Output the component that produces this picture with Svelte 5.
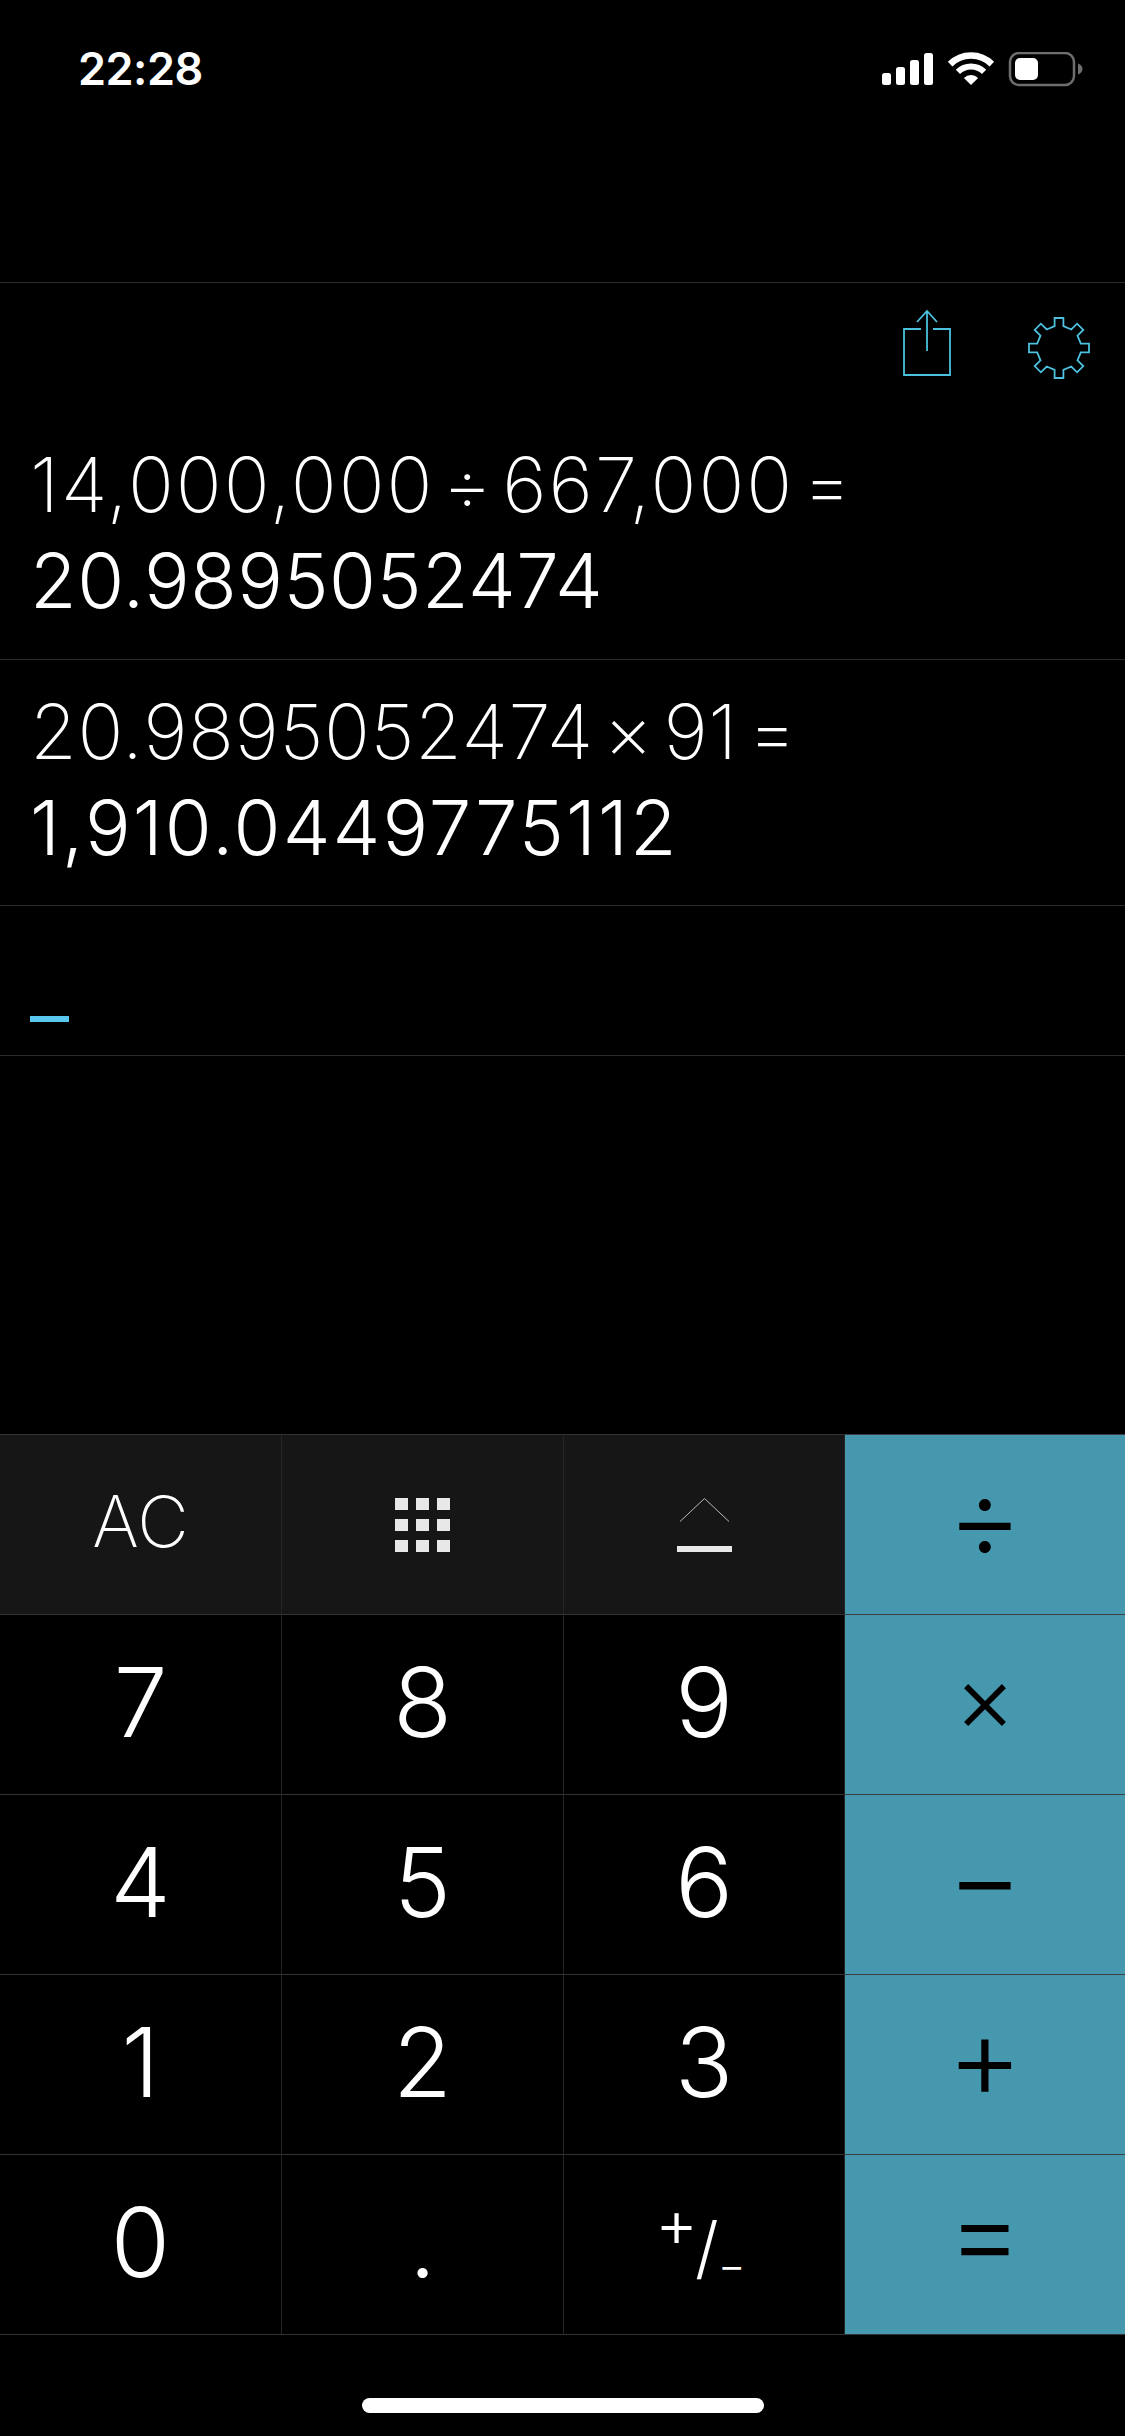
<script>
	const history = [
		{ expr: '14,000,000 ÷ 667,000 =', result: '20.9895052474', wide: false },
		{ expr: '20.9895052474 × 91 =', result: '1,910.0449775112', wide: true }
	];
	const digits = [
		['7', '8', '9', '×'],
		['4', '5', '6', '−'],
		['1', '2', '3', '+']
	];

	// gear outline: 8 identical teeth rotated round the centre
	function gearPoints() {
		const tooth = [[-4.4, -21.8], [-4.4, -30], [4.4, -30], [4.4, -21.8]];
		const pts = [];
		for (let i = 0; i < 8; i++) {
			const a = (i * Math.PI) / 4;
			for (const [x, y] of tooth) {
				const px = x * Math.cos(a) - y * Math.sin(a);
				const py = x * Math.sin(a) + y * Math.cos(a);
				pts.push(`${px.toFixed(1)},${py.toFixed(1)}`);
			}
		}
		return pts.join(' ');
	}
</script>

<div class="phone">
	<div class="status">
		<span class="time">22:28</span>
		<svg class="status-icons" width="202" height="35" viewBox="0 0 202 35">
			<rect x="0" y="21" width="9" height="12" rx="2.5" fill="#fff" />
			<rect x="14" y="15" width="9" height="18" rx="2.5" fill="#fff" />
			<rect x="28" y="8" width="9" height="25" rx="2.5" fill="#fff" />
			<rect x="42" y="1" width="9" height="32" rx="2.5" fill="#fff" />
			<g fill="none" stroke="#fff">
				<path d="M68.14 12.14 A29.5 29.5 0 0 1 109.86 12.14" stroke-width="6.5" />
				<path d="M75.92 19.92 A18.5 18.5 0 0 1 102.08 19.92" stroke-width="6" />
			</g>
			<path d="M89 33 L81.9 25.9 A10 10 0 0 1 96.1 25.9 Z" fill="#fff" />
			<rect x="128" y="1" width="64" height="32" rx="9" fill="none" stroke="#6e6e6e" stroke-width="2.5" />
			<rect x="133" y="6" width="23" height="22" rx="5" fill="#fff" />
			<path d="M196 11.5 C199 12.5 200.5 14.5 200.5 17 C200.5 19.5 199 21.5 196 22.5 Z" fill="#6e6e6e" />
		</svg>
	</div>

	<div class="toolbar">
		<svg class="share" width="48" height="66" viewBox="0 0 48 66" fill="none" stroke="#4cc0de" stroke-width="1.8">
			<path d="M18 19 H1 V65 H47 V19 H30" />
			<path d="M24 41 V1 M14 12 L24 1 L34 12" />
		</svg>
		<svg class="gear" width="64" height="64" viewBox="-32 -32 64 64" fill="none" stroke="#4cc0de" stroke-width="1.8">
			<polygon points={gearPoints()} />
		</svg>
	</div>

	{#each history as row, i}
		<div class="entry" class:first={i === 0}>
			<div class="expr" class:wide={row.wide}>{row.expr}</div>
			<div class="result" class:wide={row.wide}>{row.result}</div>
		</div>
	{/each}

	<div class="input"><span class="cursor"></span></div>

	<div class="keys">
		<button class="key fn ac">AC</button>
		<button class="key fn" aria-label="Grid">
			<svg width="55" height="54" viewBox="0 0 55 54" fill="#e8e8e8">
				{#each [0, 21, 42] as y}
					{#each [0, 21, 42] as x}
						<rect {x} {y} width="13" height="12" />
					{/each}
				{/each}
			</svg>
		</button>
		<button class="key fn" aria-label="Second function">
			<svg width="55" height="54" viewBox="0 0 55 54">
				<path d="M3 23.5 L27.5 0.5 L52 23.5" fill="none" stroke="#bbb" stroke-width="1" />
				<rect x="0" y="48" width="55" height="6" fill="#e8e8e8" />
			</svg>
		</button>
		<button class="key op">÷</button>

		{#each digits as row}
			{#each row as k, j}
				<button class="key" class:op={j === 3} class:times={k === '×'}>{k}</button>
			{/each}
		{/each}

		<button class="key">0</button>
		<button class="key">.</button>
		<button class="key sign"><span class="plus">+</span><span class="slash">/</span><span class="minus">−</span></button>
		<button class="key op equals">=</button>
	</div>

	<div class="home"><span class="home-bar"></span></div>
</div>

<style>
	:global(body) {
		margin: 0;
		background: #000;
	}

	.phone {
		width: 1125px;
		height: 2436px;
		display: flex;
		flex-direction: column;
		background: #000;
		color: #fff;
		font-family: Inter, 'Liberation Sans', sans-serif;
		overflow: hidden;
	}

	.status {
		height: 282px;
		border-bottom: 1px solid #2c2c2c;
		display: flex;
		justify-content: space-between;
		align-items: flex-start;
		flex-shrink: 0;
	}

	.time {
		margin: 42px 0 0 78px;
		font-size: 45px;
		line-height: 54px;
		font-weight: 600;
		letter-spacing: -0.5px;
	}

	.status-icons {
		margin: 52px 41px 0 0;
	}

	.toolbar {
		height: 130px;
		position: relative;
		flex-shrink: 0;
	}

	.share {
		position: absolute;
		left: 903px;
		top: 27px;
	}

	.gear {
		position: absolute;
		left: 1027px;
		top: 33px;
	}

	.entry {
		height: 222px;
		border-bottom: 1px solid #2c2c2c;
		padding: 23px 0 0 30px;
		flex-shrink: 0;
	}

	.entry.first {
		height: 223px;
	}

	.expr,
	.result {
		font-size: 76px;
		line-height: 96px;
		white-space: nowrap;
	}

	.expr {
		font-weight: 250;
		letter-spacing: 2px;
		word-spacing: -15px;
	}

	.expr.wide {
		letter-spacing: 0.6px;
		word-spacing: -12px;
	}

	.result {
		font-weight: 350;
		letter-spacing: 0.5px;
	}

	.result.wide {
		letter-spacing: 2.1px;
	}

	.input {
		height: 149px;
		border-bottom: 1px solid #2c2c2c;
		position: relative;
		flex-shrink: 0;
	}

	.cursor {
		position: absolute;
		left: 30px;
		top: 110px;
		width: 39px;
		height: 6px;
		background: #5ac8ee;
	}

	.keys {
		margin-top: auto;
		display: grid;
		grid-template-columns: 282px 282px 281px 1fr;
		grid-auto-rows: 180px;
		border-bottom: 1px solid #333;
		flex-shrink: 0;
	}

	.key {
		background: #000;
		color: #fff;
		border: 0;
		border-top: 1px solid #333;
		border-right: 1px solid #262626;
		padding: 0 0 6px;
		margin: 0;
		font-family: inherit;
		font-size: 96px;
		font-weight: 300;
		display: flex;
		align-items: center;
		justify-content: center;
	}

	.key.fn {
		background: #161616;
		padding: 0;
	}

	.key.ac {
		font-size: 71px;
		font-weight: 250;
		padding-bottom: 8px;
	}

	.key.op {
		background: #4698af;
		color: #000;
		font-size: 116px;
		font-weight: 300;
		border-right: 0;
		border-top-color: #3f3f3f;
		padding-bottom: 16px;
	}

	.key.op.times {
		font-size: 94px;
		padding-bottom: 14px;
	}

	.key.op.equals {
		padding-bottom: 28px;
	}

	.sign {
		position: relative;
	}

	.plus {
		position: absolute;
		left: 91px;
		top: 36px;
		font-size: 66px;
		line-height: 64px;
	}

	.slash {
		position: absolute;
		left: 131px;
		top: 54px;
		font-size: 68px;
		line-height: 76px;
	}

	.minus {
		position: absolute;
		left: 154px;
		top: 90px;
		font-size: 42px;
		line-height: 40px;
	}

	.home {
		height: 101px;
		display: flex;
		justify-content: center;
		flex-shrink: 0;
	}

	.home-bar {
		width: 402px;
		height: 15px;
		margin-top: 63px;
		border-radius: 8px;
		background: #fff;
	}
</style>
